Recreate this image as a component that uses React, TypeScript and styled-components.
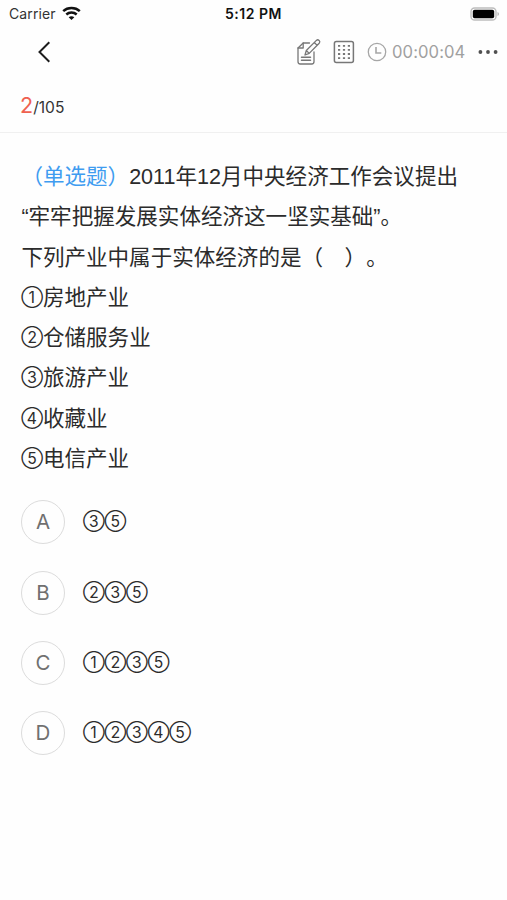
import React from 'react';
import styled, { createGlobalStyle } from 'styled-components';

const GlobalStyle = createGlobalStyle`
  * { box-sizing: border-box; }
  html, body { margin: 0; padding: 0; background: #fefefe; }
  body {
    font-family: "Liberation Sans", "Noto Sans CJK SC", sans-serif;
    color: #2b2b2b;
    text-spacing-trim: space-all;
  }
`;

const Screen = styled.div`
  width: 507px;
  height: 900px;
  overflow: hidden;
  background: #fefefe;
`;

const StatusBar = styled.header`
  display: grid;
  grid-template-columns: 1fr auto 1fr;
  align-items: center;
  height: 27px;
  padding: 0 7px 0 9px;
  font-family: Inter, sans-serif;
  font-size: 14px;
  line-height: 27px;
`;

const Carrier = styled.div`
  display: flex;
  align-items: center;
  gap: 6px;
  color: #333;
  letter-spacing: 0.12px;
`;

const Clock = styled.div`
  font-weight: 600;
  font-size: 14px;
  letter-spacing: 0.5px;
  margin-right: 2px;
  color: #111;
`;

const BatterySlot = styled.div`
  display: flex;
  justify-content: flex-end;
`;

const NavBar = styled.nav`
  display: flex;
  align-items: center;
  justify-content: space-between;
  height: 50px;
  padding: 0 9px 0 37px;
`;

const Tools = styled.div`
  display: flex;
  align-items: center;
`;

const IconButton = styled.button<{ $gap?: number }>`
  display: flex;
  padding: 0;
  border: 0;
  background: none;
  margin-right: ${(p) => p.$gap ?? 0}px;
`;

const Timer = styled.span`
  width: 74px;
  margin: 0 12px 0 5px;
  font-family: Inter, sans-serif;
  font-size: 16.6px;
  letter-spacing: 0.1px;
  line-height: 20px;
  white-space: nowrap;
  color: #a0a0a0;
`;

const Progress = styled.div`
  display: flex;
  align-items: baseline;
  height: 56px;
  padding: 12px 20px 0;
  border-bottom: 1px solid #f0f0f0;
  font-family: Inter, sans-serif;
  font-size: 15.6px;
  line-height: 32px;
  color: #333;
`;

const Current = styled.span`
  font-size: 21.5px;
  color: #ef6150;
`;

const Question = styled.section`
  padding: 24px 21.4px 0;
  font-size: 21.55px;
  line-height: 40.3px;
  white-space: nowrap;
`;

const Line = styled.div`
  height: 40.3px;
`;

const Kind = styled.span`
  color: #3e9cf0;
`;

const Mark = styled.span`
  display: inline-flex;
  justify-content: center;
  width: 21.6px;
  height: 40px;
  line-height: 40px;
  vertical-align: top;
  font-family: Inter, "Noto Sans CJK SC", sans-serif;
  font-size: 15.7px;
`;

const Options = styled.ul`
  display: flex;
  flex-direction: column;
  gap: 26.2px;
  margin: 0;
  padding: 21px 21px 0;
  list-style: none;
`;

const Option = styled.li`
  display: flex;
  align-items: center;
  gap: 18px;
  height: 44px;
  font-size: 21.55px;
  line-height: 44px;
`;

const Answer = styled.span`
  display: flex;
`;

const Letter = styled.span`
  display: flex;
  align-items: center;
  justify-content: center;
  width: 44px;
  height: 44px;
  border: 1px solid #dcdcdc;
  border-radius: 50%;
  font-family: Inter, sans-serif;
  font-size: 20.5px;
  line-height: 42px;
  color: #707070;
`;

const WifiIcon = () => (
  <svg width="19" height="15" viewBox="0 0 19 15" fill="none" stroke="#111" strokeWidth="2.5">
    <path d="M1.2 5.1C5.8.9 13.2.9 17.8 5.1" />
    <path d="M4.3 8.5c2.9-2.6 7.5-2.6 10.4 0" />
    <path d="M9.5 14 6.7 11.2c1.5-1.4 4.1-1.4 5.6 0Z" fill="#111" stroke="none" />
  </svg>
);

const BatteryIcon = () => (
  <svg width="30" height="14" viewBox="0 0 30 14">
    <rect x="1" y="1" width="25" height="12" rx="3.6" fill="#fff" stroke="#bdbdbd" strokeWidth="1.4" />
    <rect x="2.8" y="2.8" width="21.4" height="8.4" rx="1.8" fill="#000" />
    <path d="M27.5 5c2 .7 2 3.3 0 4Z" fill="#b5b5b5" />
  </svg>
);

const BackIcon = () => (
  <svg width="14" height="24" viewBox="0 0 14 24" fill="none" stroke="#1c1c1c" strokeWidth="2">
    <path d="M12.3 2.3 2.5 12l9.8 9.7" />
  </svg>
);

const NoteIcon = () => (
  <svg width="26" height="28" viewBox="0 0 26 28" fill="none" stroke="#777" strokeWidth="1.3" strokeLinejoin="round" strokeLinecap="round">
    <path d="M13.5 5H7.2L2 10v13.5Q2 26 4.2 26h11.6q2.2 0 2.2-2.5V14" />
    <path d="M7.2 5v5H2" />
    <path d="m9 17 1.3-4.5L20.4 2.4q1.3-1.2 2.7 0 1.4 1.4.1 2.8L13.2 15.4 9 17ZM10.3 12.5l2.9 2.9M18.3 4.5l2.9 2.9" />
    <path d="M5.5 19.2h9M5.5 22.2h9" strokeWidth="1.5" />
  </svg>
);

const SheetIcon = () => (
  <svg width="22" height="24" viewBox="0 0 22 24" fill="none" stroke="#777" strokeWidth="1.5">
    <rect x="1.4" y="1.4" width="19" height="21" rx="2" />
    <path d="M5 5.8h12M5 9.9h12M5 14h12M5 18.1h12" strokeWidth="1.8" strokeDasharray="2.2 2.7" />
  </svg>
);

const TimeIcon = () => (
  <svg width="20" height="20" viewBox="0 0 20 20" fill="none" stroke="#a6a6a6" strokeWidth="1.3">
    <circle cx="10" cy="10" r="8.7" />
    <path d="M9 5v6h5.3" strokeWidth="1.6" />
  </svg>
);

const MoreIcon = () => (
  <svg width="20" height="6" viewBox="0 0 20 6" fill="#505050">
    <circle cx="2.4" cy="3" r="1.9" />
    <circle cx="10" cy="3" r="1.9" />
    <circle cx="17.6" cy="3" r="1.9" />
  </svg>
);

const statements = [
  { mark: '①', text: '房地产业' },
  { mark: '②', text: '仓储服务业' },
  { mark: '③', text: '旅游产业' },
  { mark: '④', text: '收藏业' },
  { mark: '⑤', text: '电信产业' },
];

const options = [
  { letter: 'A', marks: '③⑤' },
  { letter: 'B', marks: '②③⑤' },
  { letter: 'C', marks: '①②③⑤' },
  { letter: 'D', marks: '①②③④⑤' },
];

export default function App() {
  return (
    <Screen lang="zh-CN">
      <GlobalStyle />
      <StatusBar>
        <Carrier>Carrier<WifiIcon /></Carrier>
        <Clock>5:12 PM</Clock>
        <BatterySlot><BatteryIcon /></BatterySlot>
      </StatusBar>
      <NavBar>
        <IconButton aria-label="返回"><BackIcon /></IconButton>
        <Tools>
          <IconButton $gap={11} aria-label="笔记"><NoteIcon /></IconButton>
          <IconButton $gap={12} aria-label="答题卡"><SheetIcon /></IconButton>
          <TimeIcon />
          <Timer>00:00:04</Timer>
          <IconButton aria-label="更多"><MoreIcon /></IconButton>
        </Tools>
      </NavBar>
      <Progress><Current>2</Current>/105</Progress>
      <Question>
        <Line><Kind>（单选题）</Kind>2011年12月中央经济工作会议提出</Line>
        <Line>“牢牢把握发展实体经济这一坚实基础”。</Line>
        <Line>下列产业中属于实体经济的是（　）。</Line>
        {statements.map((s) => <Line key={s.mark}><Mark>{s.mark}</Mark>{s.text}</Line>)}
      </Question>
      <Options>
        {options.map((o) => (
          <Option key={o.letter}>
            <Letter>{o.letter}</Letter>
            <Answer>{[...o.marks].map((m) => <Mark key={m}>{m}</Mark>)}</Answer>
          </Option>
        ))}
      </Options>
    </Screen>
  );
}
